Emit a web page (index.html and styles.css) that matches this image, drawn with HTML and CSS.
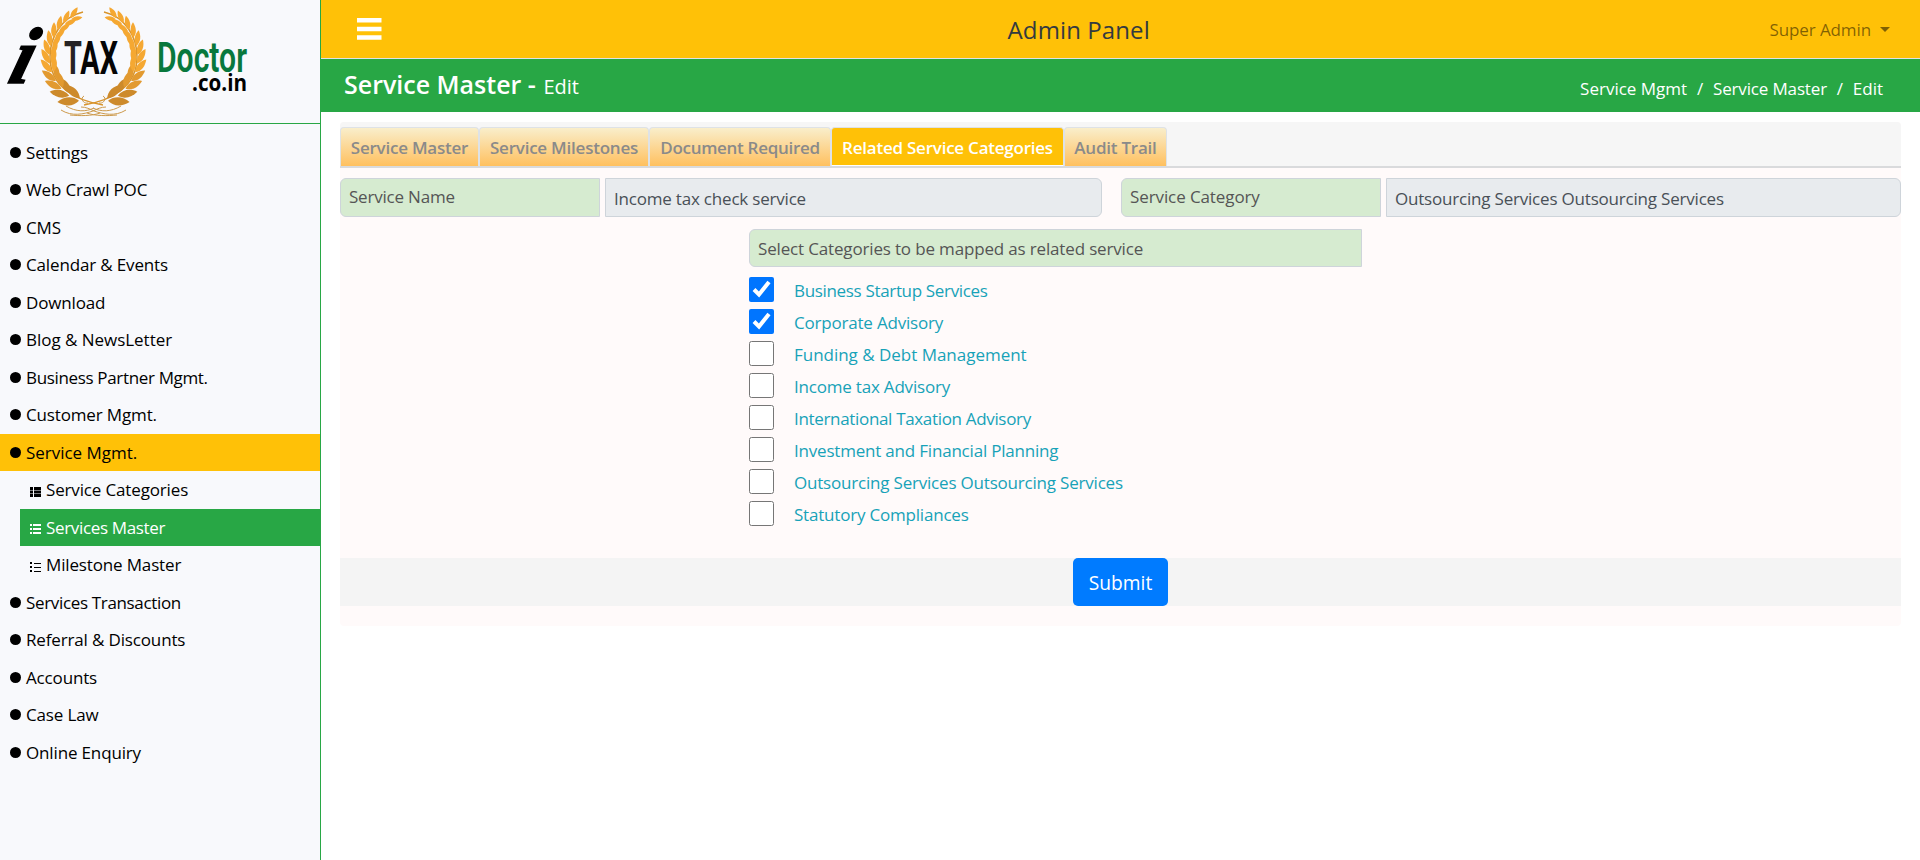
FILE: index.html
```html
<!DOCTYPE html>
<html lang="en">
<head>
<meta charset="utf-8">
<title>Admin Panel</title>
<link rel="stylesheet" href="styles.css">
</head>
<body>
<aside class="sidebar">
  <div class="brand">
    <svg class="logo" width="260" height="123" viewBox="0 0 260 123">
      <defs>
        <g id="pair">
          <path d="M2 1C-1 8-8 10-15 9C-12 3-5-1 2 1Z"/>
          <path d="M2-1C-1-7-7-9-14-7C-11-2-5 1 2-1Z"/>
        </g>
        <g id="branch">
          <path class="stem" d="M103 105C74 100 50 86 50 57C50 36 62 17 83 12"/>
          <g transform="translate(93.5 57) scale(.96 1)">
            <g fill="#cd8a2b">
              <use href="#pair" transform="rotate(22) translate(0 45) scale(1.2)"/>
              <use href="#pair" transform="rotate(36) translate(0 45) scale(1.1)"/>
            </g>
            <g fill="#e29a30">
              <use href="#pair" transform="rotate(49) translate(0 45) scale(1)"/>
              <use href="#pair" transform="rotate(61) translate(0 45) scale(.95)"/>
            </g>
            <g fill="#f5a832">
              <use href="#pair" transform="rotate(73) translate(0 45) scale(.92)"/>
              <use href="#pair" transform="rotate(84) translate(0 45) scale(.9)"/>
              <use href="#pair" transform="rotate(95) translate(0 45) scale(.87)"/>
              <use href="#pair" transform="rotate(106) translate(0 45) scale(.85)"/>
              <use href="#pair" transform="rotate(117) translate(0 45) scale(.82)"/>
              <use href="#pair" transform="rotate(128) translate(0 45) scale(.78)"/>
              <use href="#pair" transform="rotate(139) translate(0 45) scale(.75)"/>
              <use href="#pair" transform="rotate(150) translate(0 45) scale(.7)"/>
            </g>
          </g>
          <path class="curl" d="M61 110C72 117 84 114 93 111C97 109 101 107 106 107M66 106C76 112 86 112 94 108M84 96C80 98 83 104 88 103M70 115C80 116 92 116 100 113"/>
        </g>
      </defs>
      <use href="#branch"/>
      <use href="#branch" transform="translate(187 0) scale(-1 1)"/>
      <text class="logo-i" transform="translate(6 83) skewX(-16)">i</text>
      <text class="logo-tax" x="64" y="74" textLength="54" lengthAdjust="spacingAndGlyphs"><tspan fill="#262324">T</tspan>AX</text>
      <text class="logo-doctor" x="157" y="72" textLength="90" lengthAdjust="spacingAndGlyphs">Doctor</text>
      <text class="logo-domain" x="192" y="91" textLength="55" lengthAdjust="spacingAndGlyphs">.co.in</text>
    </svg>
  </div>
  <nav class="menu">
    <a class="item"><i class="dot"></i><span>Settings</span></a>
    <a class="item"><i class="dot"></i><span>Web Crawl POC</span></a>
    <a class="item"><i class="dot"></i><span>CMS</span></a>
    <a class="item"><i class="dot"></i><span>Calendar &amp; Events</span></a>
    <a class="item"><i class="dot"></i><span>Download</span></a>
    <a class="item"><i class="dot"></i><span class="wide">Blog &amp; NewsLetter</span></a>
    <a class="item"><i class="dot"></i><span class="tight">Business Partner Mgmt.</span></a>
    <a class="item"><i class="dot"></i><span>Customer Mgmt.</span></a>
    <a class="item open"><i class="dot"></i><span class="wide">Service Mgmt.</span></a>
    <div class="submenu">
      <a class="item"><svg class="list" width="11" height="10"><path d="M0 0h3v3H0zM4 0h7v3H4zM0 3.500h3v3H0zM4 3.500h7v3H4zM0 7h3v3H0zM4 7h7v3H4z"/></svg><span>Service Categories</span></a>
      <a class="item current"><svg class="list" width="11" height="10"><path d="M0 0h2v2H0zM3 0h8v2H3zM0 4h2v2H0zM3 4h8v2H3zM0 8h2v2H0zM3 8h8v2H3z"/></svg><span class="tight">Services Master</span></a>
      <a class="item"><svg class="list" width="11" height="10"><path d="M0 0h2v2H0zM4 1h7v1H4zM0 4h2v2H0zM4 5h7v1H4zM0 8h2v2H0zM4 9h7v1H4z"/></svg><span>Milestone Master</span></a>
    </div>
    <a class="item"><i class="dot"></i><span class="tight">Services Transaction</span></a>
    <a class="item"><i class="dot"></i><span>Referral &amp; Discounts</span></a>
    <a class="item"><i class="dot"></i><span>Accounts</span></a>
    <a class="item"><i class="dot"></i><span>Case Law</span></a>
    <a class="item"><i class="dot"></i><span>Online Enquiry</span></a>
  </nav>
</aside>
<main class="page">
  <header class="topbar">
    <svg class="burger" width="25" height="22" viewBox="0 0 25 22"><path d="M0 0h24.500v4.500H0zM0 8.700h24.500v4.500H0zM0 17.200h24.500v4.500H0z"/></svg>
    <h1 class="panel-title">Admin Panel</h1>
    <div class="user"><span>Super Admin</span><i class="caret"></i></div>
  </header>
  <div class="titlebar">
    <h2 class="title">Service Master - <small>Edit</small></h2>
    <div class="crumbs"><span>Service Mgmt</span><b>/</b><span class="mid">Service Master</span><b>/</b><span>Edit</span></div>
  </div>
  <section class="card">
    <div class="tabs">
      <a class="tab t1">Service Master</a>
      <a class="tab t2">Service Milestones</a>
      <a class="tab t3">Document Required</a>
      <a class="tab t4 active">Related Service Categories</a>
      <a class="tab t5">Audit Trail</a>
    </div>
    <div class="fields">
      <label class="label">Service Name</label>
      <div class="value first">Income tax check service</div>
      <label class="label category">Service Category</label>
      <div class="value">Outsourcing Services Outsourcing Services</div>
    </div>
    <div class="picker">
      <div class="label prompt">Select Categories to be mapped as related service</div>
      <label class="option"><input type="checkbox" checked><span class="tight">Business Startup Services</span></label>
      <label class="option"><input type="checkbox" checked><span>Corporate Advisory</span></label>
      <label class="option"><input type="checkbox"><span class="wide">Funding &amp; Debt Management</span></label>
      <label class="option"><input type="checkbox"><span>Income tax Advisory</span></label>
      <label class="option"><input type="checkbox"><span class="tight">International Taxation Advisory</span></label>
      <label class="option"><input type="checkbox"><span>Investment and Financial Planning</span></label>
      <label class="option"><input type="checkbox"><span>Outsourcing Services Outsourcing Services</span></label>
      <label class="option"><input type="checkbox"><span>Statutory Compliances</span></label>
    </div>
    <div class="actions"><button class="submit">Submit</button></div>
  </section>
</main>
</body>
</html>
```

FILE: styles.css
```css
*{box-sizing:border-box}
body{margin:0;display:flex;height:860px;overflow:hidden;background:#fff;font-family:"Open Sans",sans-serif;font-size:17px;color:#495057}
.sidebar{width:321px;height:860px;flex:none;background:#f8f9fc;border-right:1px solid #28a745}
.brand{height:124px;border-bottom:1px solid #28a745}
.logo{display:block}
.stem,.curl{fill:none;stroke:#d8942c;stroke-width:1.500}
.curl{stroke:#cd9a4c;stroke-width:1}
.logo-i{font:italic 700 80px "Liberation Serif",serif;fill:#000;stroke:#000;stroke-width:1.500}
.logo-tax{font:700 46px Roboto,sans-serif;fill:#050505}
.logo-doctor{font:600 42px Roboto,sans-serif;fill:#08783d}
.logo-domain{font:700 23px "Open Sans",sans-serif;fill:#000}
.menu{padding-top:9.700px;color:#000;letter-spacing:-.150px}
.menu .tight{letter-spacing:-.340px}
.menu .wide{letter-spacing:-.030px}
.item{display:flex;align-items:center;height:37.500px;padding-left:10px;line-height:37.500px}
.dot{width:11px;height:11px;border-radius:50%;background:#000;margin-right:5px}
.open{background:#ffc107}
.submenu{margin-left:20px}
.list{margin:4px 5px 0 0;fill:currentColor}
.current{background:#28a745;color:#fff}
.page{flex:1;min-width:0}
.topbar{height:59px;display:flex;align-items:center;background:#ffc107;border-bottom:1px solid #dee2e6;padding:0 30px 0 36px}
.burger{fill:#fff}
.panel-title{flex:1;margin:0;padding-left:6px;text-align:center;font-weight:500;font-size:24px;letter-spacing:.100px;color:#343a40}
.user{display:flex;align-items:center;color:rgba(0,0,0,.5);letter-spacing:-.100px}
.caret{margin-left:9px;border:5px solid transparent;border-top-color:currentColor;border-bottom:0}
.titlebar{height:53px;display:flex;align-items:center;justify-content:space-between;background:#28a745;color:#fff;padding:0 37px 0 23px}
.title{margin:0;padding-bottom:3px;font-size:25px;font-weight:600}
.title small{margin-left:1px;font-size:20px;font-weight:400}
.crumbs{display:flex;gap:9.800px;padding-top:6px}
.crumbs b{font-weight:400}
.mid{letter-spacing:-.150px}
.card{margin:10px 19px 0 19px;height:504px;background:snow;border-radius:4px}
.tabs{display:flex;align-items:flex-end;height:46px;background:#f6f6f6;border-bottom:2px solid #d9dadc;border-radius:4px 4px 0 0}
.tab{height:39px;display:flex;align-items:center;justify-content:center;border:1px solid #dee2e6;border-bottom:0;border-radius:4px 4px 0 0;font-weight:600;letter-spacing:-.230px;color:#8a8a8a;background:linear-gradient(#f9eecb,#ffc05f)}
.t1{width:139px}
.t2{width:170px}
.t3{width:182px;letter-spacing:-.300px}
.t4{width:233px}
.t5{width:103px}
.active{padding-top:1px;background:#ffc107;color:#fff;border-bottom:1px solid #fff}
.fields{display:flex;margin-top:10px;height:39px;letter-spacing:-.200px}
.label,.value{display:flex;align-items:center;border:1px solid #ced4da;padding:1px 0 0 8px}
.label{width:260px;background:#d6ebd0;border-radius:6px 0 0 6px;color:#555;padding-bottom:4px}
.category{letter-spacing:-.100px}
.value{flex:1;margin-left:5px;background:#e8ebee;border-radius:0 6px 6px 0}
.first{flex:none;width:497px;margin-right:19px}
.picker{margin:12px 0 0 409px;width:613px;letter-spacing:-.200px}
.prompt{width:613px;height:38px;padding-bottom:0;margin-bottom:10px;letter-spacing:-.160px}
.option{display:flex;align-items:flex-start;height:32px;color:#17a2b8}
.option input{width:25px;height:25px;margin:0 20px 0 0}
.option span{line-height:28px}
.option .tight{letter-spacing:-.330px}
.option .wide{letter-spacing:-.020px}
.actions{margin-top:25px;height:48px;background:#f4f4f4;display:flex;justify-content:center}
.submit{width:95px;height:48px;padding:1px 0 0;border:0;border-radius:5px;background:#007bff;color:#fff;font:19.200px "Open Sans",sans-serif}
```
